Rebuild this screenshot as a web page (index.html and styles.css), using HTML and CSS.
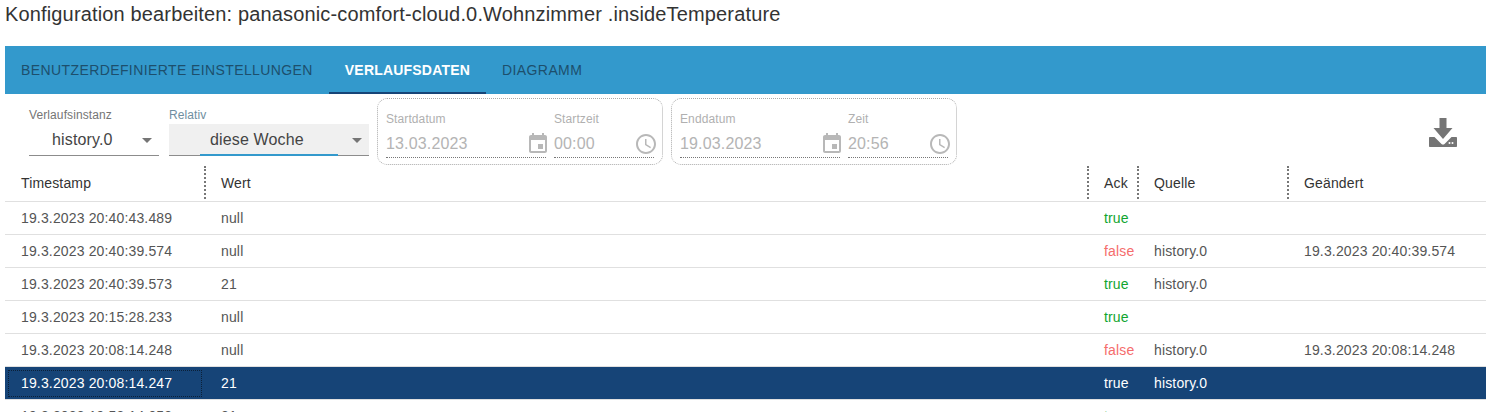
FILE: index.html

```html
<!DOCTYPE html>
<html lang="de">
<head>
    <meta charset="UTF-8">
    <meta name="viewport" content="width=device-width, initial-scale=1.0">
    <title>Konfiguration bearbeiten</title>
    <link rel="stylesheet" href="styles.css">
</head>
<body>
    <h1 class="title">Konfiguration bearbeiten: panasonic-comfort-cloud.0.Wohnzimmer .insideTemperature</h1>

    <div class="content">
        <div class="tabs">
            <div class="tab">Benutzerdefinierte Einstellungen</div>
            <div class="tab tab-active">Verlaufsdaten</div>
            <div class="tab">Diagramm</div>
        </div>

        <div class="toolbar">
            <div class="select select-instance">
                <label>Verlaufsinstanz</label>
                <div class="select-value">history.0<span class="arrow"></span></div>
            </div>
            <div class="select select-relative">
                <label>Relativ</label>
                <div class="select-value">diese Woche<span class="arrow"></span></div>
            </div>

            <div class="range">
                <div class="field field-date">
                    <label>Startdatum</label>
                    <div class="field-value">13.03.2023
                        <svg class="icon" viewBox="0 0 24 24"><path d="M17 12h-5v5h5v-5zM16 1v2H8V1H6v2H5c-1.11 0-1.99.9-1.99 2L3 19c0 1.1.89 2 2 2h14c1.1 0 2-.9 2-2V5c0-1.1-.9-2-2-2h-1V1h-2zm3 18H5V8h14v11z"/></svg>
                    </div>
                </div>
                <div class="field field-time">
                    <label>Startzeit</label>
                    <div class="field-value">00:00
                        <svg class="icon" viewBox="0 0 24 24"><path d="M11.99 2C6.47 2 2 6.48 2 12s4.47 10 9.99 10C17.52 22 22 17.52 22 12S17.52 2 11.99 2zM12 20c-4.42 0-8-3.58-8-8s3.58-8 8-8 8 3.58 8 8-3.58 8-8 8zm.5-13H11v6l5.25 3.15.75-1.23-4.5-2.67z"/></svg>
                    </div>
                </div>
            </div>

            <div class="range">
                <div class="field field-date">
                    <label>Enddatum</label>
                    <div class="field-value">19.03.2023
                        <svg class="icon" viewBox="0 0 24 24"><path d="M17 12h-5v5h5v-5zM16 1v2H8V1H6v2H5c-1.11 0-1.99.9-1.99 2L3 19c0 1.1.89 2 2 2h14c1.1 0 2-.9 2-2V5c0-1.1-.9-2-2-2h-1V1h-2zm3 18H5V8h14v11z"/></svg>
                    </div>
                </div>
                <div class="field field-time">
                    <label>Zeit</label>
                    <div class="field-value">20:56
                        <svg class="icon" viewBox="0 0 24 24"><path d="M11.99 2C6.47 2 2 6.48 2 12s4.47 10 9.99 10C17.52 22 22 17.52 22 12S17.52 2 11.99 2zM12 20c-4.42 0-8-3.58-8-8s3.58-8 8-8 8 3.58 8 8-3.58 8-8 8zm.5-13H11v6l5.25 3.15.75-1.23-4.5-2.67z"/></svg>
                    </div>
                </div>
            </div>

            <div class="download">
                <svg viewBox="0 0 28 29"><path fill-rule="evenodd" d="M10.500 0h7v10h6L14 21 4.500 10h6zM1 19h4.500l7 7c.8.8 2.200.8 3 0l7-7H27c.6 0 1 .4 1 1v8c0 .6-.4 1-1 1H1c-.6 0-1-.4-1-1v-8c0-.6.4-1 1-1zM19.500 25a1 1 0 1 0 2 0a1 1 0 1 0-2 0zM22.500 25a1 1 0 1 0 2 0a1 1 0 1 0-2 0z"/></svg>
            </div>
        </div>

        <table class="history">
            <colgroup>
                <col class="col-ts"><col><col class="col-ack"><col class="col-from"><col class="col-lc">
            </colgroup>
            <thead>
                <tr>
                    <th>Timestamp</th>
                    <th>Wert</th>
                    <th>Ack</th>
                    <th>Quelle</th>
                    <th>Geändert</th>
                </tr>
            </thead>
            <tbody>
                <tr>
                    <td>19.3.2023 20:40:43.489</td><td>null</td><td class="ack-true">true</td><td></td><td></td>
                </tr>
                <tr>
                    <td>19.3.2023 20:40:39.574</td><td>null</td><td class="ack-false">false</td><td>history.0</td><td>19.3.2023 20:40:39.574</td>
                </tr>
                <tr>
                    <td>19.3.2023 20:40:39.573</td><td>21</td><td class="ack-true">true</td><td>history.0</td><td></td>
                </tr>
                <tr>
                    <td>19.3.2023 20:15:28.233</td><td>null</td><td class="ack-true">true</td><td></td><td></td>
                </tr>
                <tr>
                    <td>19.3.2023 20:08:14.248</td><td>null</td><td class="ack-false">false</td><td>history.0</td><td>19.3.2023 20:08:14.248</td>
                </tr>
                <tr class="selected">
                    <td class="focused">19.3.2023 20:08:14.247</td><td>21</td><td class="ack-true">true</td><td>history.0</td><td></td>
                </tr>
                <tr>
                    <td>19.3.2023 19:53:14.053</td><td>21</td><td class="ack-true">true</td><td></td><td></td>
                </tr>
            </tbody>
        </table>
    </div>
</body>
</html>
```

FILE: styles.css

```css
html, body {
    margin: 0;
    height: 412px;
    overflow: hidden;
}

body {
    font-family: 'Liberation Sans', Arial, sans-serif;
    background: white;
    color: #444;
}

.title {
    margin: 0;
    padding: 2px 5px 0;
    height: 46px;
    box-sizing: border-box;
    font-size: 20px;
    line-height: 24px;
    font-weight: normal;
    letter-spacing: 0.15px;
    color: #333;
    white-space: nowrap;
}

.content {
    margin-left: 5px;
}

/* tabs */
.tabs {
    display: flex;
    height: 48px;
    background: #3399cc;
}

.tab {
    padding: 0 16px;
    line-height: 48px;
    font-size: 14px;
    text-transform: uppercase;
    color: #1d4f6c;
    letter-spacing: 0.4px;
    white-space: nowrap;
}

.tab-active {
    color: white;
    font-weight: bold;
    letter-spacing: 0.2px;
    height: 46px;
    border-bottom: 2px solid #164477;
}

/* toolbar */
.toolbar {
    display: flex;
    height: 71px;
    padding-top: 4px;
    box-sizing: border-box;
}

.select {
    position: relative;
    height: 58px;
    width: 130px;
    margin-left: 24px;
}

.select-relative {
    width: 200px;
    margin-left: 10px;
}

.select label {
    display: block;
    height: 20px;
    padding-top: 10px;
    font-size: 12px;
    line-height: 14px;
    letter-spacing: 0.1px;
    box-sizing: border-box;
    color: #757575;
}

.select-relative label {
    color: #6f8ea0;
}

.select-value {
    position: relative;
    height: 32px;
    margin-top: 6px;
    padding-left: 23px;
    line-height: 31px;
    font-size: 16px;
    letter-spacing: 0.15px;
    color: #444;
    border-bottom: 1px solid #8c8c8c;
    box-sizing: border-box;
}

.select-relative .select-value {
    padding-left: 41px;
    background: #f0f0f0;
}

/* focus underline of the active select */
.select-relative .select-value::after {
    content: "";
    position: absolute;
    left: 31px;
    right: 31px;
    bottom: -1px;
    height: 2px;
    background: #3399cc;
}

.arrow {
    position: absolute;
    right: 7px;
    top: 14px;
    border-left: 5px solid transparent;
    border-right: 5px solid transparent;
    border-top: 5px solid #757575;
}

.range {
    display: flex;
    gap: 8px;
    width: 286px;
    height: 67px;
    margin-left: 8px;
    padding: 0 0 0 8px;
    box-sizing: border-box;
    border: 1px dotted #aaa;
    border-radius: 10px;
}

.field {
    padding-top: 13px;
}

.field-date {
    width: 160px;
}

.field-time {
    width: 100px;
}

.field label {
    display: block;
    font-size: 12px;
    line-height: 14px;
    letter-spacing: 0.1px;
    color: #b0b0b0;
}

.field-value {
    display: flex;
    justify-content: space-between;
    align-items: center;
    height: 32px;
    padding-top: 5px;
    font-size: 16px;
    letter-spacing: 0.15px;
    color: #b4b4b4;
    border-bottom: 1px dotted #777;
    box-sizing: border-box;
    white-space: nowrap;
}

.icon {
    width: 24px;
    height: 24px;
    fill: #b8b8b8;
    flex: none;
    margin-right: -4px;
}

.download {
    flex: 1;
    display: flex;
    justify-content: flex-end;
    padding: 20px 29px 0 0;
}

.download svg {
    width: 28px;
    height: 29px;
    fill: #757575;
}

/* table */
.history {
    width: 1481px;
    table-layout: fixed;
    border-collapse: collapse;
    font-size: 14px;
    letter-spacing: 0.15px;
}

.col-ts { width: 200px; }
.col-ack { width: 50px; }
.col-from { width: 150px; }
.col-lc { width: 198px; }

.history th {
    position: relative;
    height: 36px;
    padding: 0 0 0 16px;
    text-align: left;
    font-weight: normal;
    color: #333;
    border-bottom: 1px solid #e0e0e0;
}

.history th + th::before {
    content: "";
    position: absolute;
    left: -1px;
    top: 1px;
    bottom: 2px;
    border-left: 2px dotted #777;
}

.history td {
    height: 33px;
    padding: 0 0 0 16px;
    box-sizing: border-box;
    color: #555;
    border-bottom: 1px solid #e0e0e0;
    white-space: nowrap;
}

.history .ack-true { color: #11a52f; }
.history .ack-false { color: #f56c6c; }

.history .selected td {
    background: #164477;
    color: white;
}

.history .selected .focused {
    outline: 1px dotted #0b2038;
    outline-offset: -4px;
}
```
